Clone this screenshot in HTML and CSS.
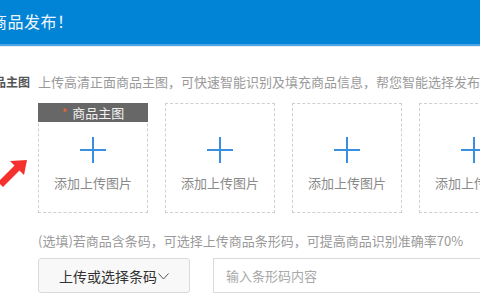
FILE: index.html
```html
<!DOCTYPE html>
<html lang="zh">
<head>
<meta charset="utf-8">
<link rel="stylesheet" href="styles.css">
</head>
<body>
<header class="topbar">
  <span class="title">商品发布！</span>
</header>
<main class="main">
  <div class="row">
    <div class="label"><span>商品主图</span></div>
    <div class="content">
      <p class="hint">上传高清正面商品主图，可快速智能识别及填充商品信息，帮您智能选择发布类目</p>
      <div class="uploads">
        <div class="upload">
          <div class="upload-head"><span class="star">*</span>商品主图</div>
          <div class="upload-body first">
            <span class="plus"></span>
            <span class="upload-text">添加上传图片</span>
          </div>
        </div>
        <div class="upload">
          <div class="upload-body">
            <span class="plus"></span>
            <span class="upload-text">添加上传图片</span>
          </div>
        </div>
        <div class="upload">
          <div class="upload-body">
            <span class="plus"></span>
            <span class="upload-text">添加上传图片</span>
          </div>
        </div>
        <div class="upload">
          <div class="upload-body">
            <span class="plus"></span>
            <span class="upload-text">添加上传图片</span>
          </div>
        </div>
      </div>
      <p class="hint second">(选填)若商品含条码，可选择上传商品条形码，可提高商品识别准确率70%</p>
      <div class="barcode">
        <button class="btn" type="button">上传或选择条码<svg class="chev" width="11" height="7" viewBox="0 0 11 7"><path d="M0.5 0.5 L5.5 6 L10.5 0.5" fill="none" stroke="#555" stroke-width="1"/></svg></button>
        <div class="input">输入条形码内容</div>
      </div>
    </div>
  </div>
  <svg class="arrow" width="34" height="34" viewBox="0 0 34 34">
    <polygon points="27,4 24,19 19.5,14.5 3,31 -2,26 14.5,9.5 10,5" fill="#f5312f"/>
  </svg>
</main>
</body>
</html>
```

FILE: styles.css
```css
* { box-sizing: border-box; }
html, body { margin: 0; padding: 0; }
body {
  width: 480px;
  height: 300px;
  overflow: hidden;
  background: #fff;
  font-family: "Noto Sans CJK SC", "Noto Sans", sans-serif;
}
.topbar {
  height: 46px;
  background: #0284d6;
  border-bottom: 2px solid #4aa5e6;
  box-shadow: 0 1px 0 #ececec;
  display: flex;
  align-items: center;
  padding-bottom: 3px;
}
.title {
  margin-left: -9px;
  font-size: 16px;
  color: #eef6fc;
  letter-spacing: 0.5px;
}
.main {
  position: relative;
  padding-top: 28px;
}
.row {
  display: flex;
  gap: 8px;
}
.label {
  width: 30px;
  flex: none;
  display: flex;
  justify-content: flex-end;
  height: 16px;
  white-space: nowrap;
}
.label span {
  font-size: 12px;
  line-height: 16px;
  font-weight: 700;
  color: #555;
}
.content {
  flex: none;
  width: 560px;
}
.hint {
  margin: 0;
  font-size: 13px;
  line-height: 16px;
  color: #9a9a9a;
  white-space: nowrap;
}
.hint.second { margin-top: 20px; }
.uploads {
  display: flex;
  gap: 17px;
  margin-top: 13px;
}
.upload {
  width: 110px;
  height: 110px;
  flex: none;
  border: 1px dashed #cfcfcf;
  display: flex;
  flex-direction: column;
}
.upload-head {
  height: 19px;
  margin: -1px -1px 0;
  background: #676767;
  color: #f2f2f2;
  font-size: 13px;
  line-height: 19px;
  text-align: center;
}
.star {
  color: #f0652a;
  margin-right: 5px;
  font-size: 12px;
}
.upload-body {
  display: flex;
  flex-direction: column;
  align-items: center;
  padding-top: 33px;
}
.upload-body.first { padding-top: 15px; }
.plus {
  position: relative;
  width: 26px;
  height: 26px;
}
.plus::before, .plus::after {
  content: "";
  position: absolute;
  background: #3b8fe2;
}
.plus::before { left: 0; right: 0; top: 12px; height: 2px; }
.plus::after { top: 0; bottom: 0; left: 12px; width: 2px; }
.upload-text {
  margin-top: 12px;
  font-size: 13px;
  line-height: 16px;
  color: #8a8a8a;
}
.barcode {
  display: flex;
  gap: 23px;
  margin-top: 9px;
}
.btn {
  width: 152px;
  height: 35px;
  flex: none;
  border: 1px solid #dadada;
  border-radius: 3px;
  background: #f8f8f8;
  font-family: inherit;
  font-size: 14px;
  color: #333;
  display: flex;
  align-items: center;
  justify-content: center;
  gap: 1px;
  padding: 0;
}
.chev { margin-top: 1px; }
.input {
  width: 300px;
  height: 35px;
  flex: none;
  border: 1px solid #dadada;
  font-size: 13px;
  line-height: 33px;
  color: #a8a8a8;
  padding-left: 12px;
}
.arrow {
  position: absolute;
  left: 0;
  top: 110px;
}
```
